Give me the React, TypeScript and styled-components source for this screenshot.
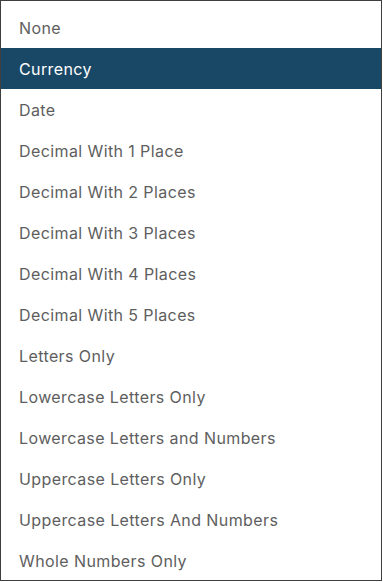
import React from 'react';
import styled, { createGlobalStyle } from 'styled-components';

const GlobalStyle = createGlobalStyle`
  html, body {
    margin: 0;
    padding: 0;
    background: #ffffff;
  }
  * {
    box-sizing: border-box;
  }
`;

const options = [
  'None',
  'Currency',
  'Date',
  'Decimal With 1 Place',
  'Decimal With 2 Places',
  'Decimal With 3 Places',
  'Decimal With 4 Places',
  'Decimal With 5 Places',
  'Letters Only',
  'Lowercase Letters Only',
  'Lowercase Letters and Numbers',
  'Uppercase Letters Only',
  'Uppercase Letters And Numbers',
  'Whole Numbers Only',
];

function App() {
  const selected = 'Currency';
  return (
    <>
      <GlobalStyle />
      <Menu role="listbox">
        {options.map((opt) => (
          <Option key={opt} role="option" $active={opt === selected} aria-selected={opt === selected}>
            {opt}
          </Option>
        ))}
      </Menu>
    </>
  );
}

const Menu = styled.ul`
  list-style: none;
  margin: 0;
  padding: 6px 0 0 0;
  width: 382px;
  height: 581px;
  overflow: hidden;
  border: 1px solid #3f3f3f;
  background: #ffffff;
  display: flex;
  flex-direction: column;
`;

const Option = styled.li<{ $active?: boolean }>`
  flex: 0 0 41px;
  display: flex;
  align-items: center;
  padding: 0 18px;
  font-family: Inter, "Noto Sans", sans-serif;
  font-size: 16px;
  letter-spacing: 0.4px;
  color: ${(p) => (p.$active ? '#ffffff' : '#5e5e5e')};
  background: ${(p) => (p.$active ? '#194866' : 'transparent')};
  cursor: pointer;
`;

export default App;
